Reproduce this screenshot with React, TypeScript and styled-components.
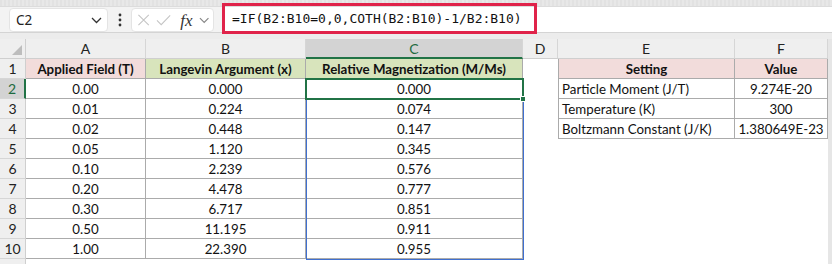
import styled, { createGlobalStyle } from 'styled-components'

const GlobalStyle = createGlobalStyle`
  html, body { margin: 0; padding: 0; background: #f3f3f3; }
  * { box-sizing: border-box; }
`

const COLS = [26, 120, 160, 217, 35, 177, 93]

const Window = styled.div`
  width: 832px;
  height: 264px;
  overflow: hidden;
  background: #f3f3f3;
  font-family: 'Lato', 'Liberation Sans', sans-serif;
`

const TopStrip = styled.div`
  height: 7px;
  background: repeating-linear-gradient(90deg, #e2e2e2 0 2px, #e8e8e8 2px 4px);
  border-bottom: 1px solid #dcdcdc;
`

const FormulaBar = styled.div`
  height: 26px;
  display: flex;
  align-items: stretch;
  background: #f3f3f3;
  border-bottom: 1px solid #d4d4d4;
`

const NameBox = styled.div`
  width: 99px;
  height: 24px;
  margin: 1px 0 0 9px;
  background: #fff;
  border: 1px solid #e4e4e4;
  border-radius: 4px;
  display: flex;
  align-items: center;
  justify-content: space-between;
  padding: 0 5px 0 6px;
  font-family: 'Noto Sans', sans-serif;
  font-size: 13.5px;
  color: #222;
`

const Dots = styled.div`
  width: 23px;
  display: flex;
  align-items: center;
  justify-content: center;
`

const FxBox = styled.div`
  width: 83px;
  height: 24px;
  margin-top: 1px;
  background: #fff;
  border: 1px solid #e4e4e4;
  border-radius: 4px;
  display: flex;
  align-items: center;
  padding: 0 4px 0 5px;
  gap: 6px;
`

const FxText = styled.span`
  font-family: 'Liberation Serif', serif;
  font-style: italic;
  font-size: 17px;
  color: #333;
  margin-left: 3px;
  line-height: 1;
`

const FormulaInput = styled.div`
  flex: 1;
  margin-left: 8px;
  background: #fff;
  position: relative;
`

const Highlight = styled.div`
  position: absolute;
  left: 0;
  top: -4px;
  width: 315px;
  height: 31px;
  border: 3px solid #e0234a;
  display: flex;
  align-items: center;
  padding-left: 7px;
  font-family: 'DejaVu Sans Mono', monospace;
  font-size: 13px;
  color: #111;
  white-space: nowrap;
`

const Band = styled.div`
  height: 6px;
  background: #ececec;
`

const Sheet = styled.div`
  position: relative;
  display: grid;
  grid-template-columns: ${COLS.map((c) => c + 'px').join(' ')} 1fr;
  grid-auto-rows: 20px;
  background: #fff;
`

const ColHead = styled.div<{ $active?: boolean }>`
  background: ${({ $active }) => ($active ? '#d3d3d3' : '#efefef')};
  border-right: 1px solid #d6d6d6;
  border-bottom: ${({ $active }) => ($active ? '2px solid #217346' : '1px solid #cfcfcf')};
  display: flex;
  align-items: center;
  justify-content: center;
  font-size: 14px;
  color: ${({ $active }) => ($active ? '#1e6b3f' : '#222')};
`

const Corner = styled.div`
  background: #efefef;
  border-right: 1px solid #cfcfcf;
  border-bottom: 1px solid #cfcfcf;
  display: flex;
  align-items: flex-end;
  justify-content: flex-end;
  padding: 0 3px 3px 0;
`

const RowHead = styled.div<{ $active?: boolean }>`
  background: ${({ $active }) => ($active ? '#d3d3d3' : '#efefef')};
  border-right: ${({ $active }) => ($active ? '2px solid #217346' : '1px solid #cfcfcf')};
  border-bottom: 1px solid #d6d6d6;
  display: flex;
  align-items: center;
  justify-content: center;
  font-size: 14px;
  color: ${({ $active }) => ($active ? '#1e6b3f' : '#222')};
`

const Gutter = styled.div`
  background: #e6e6e6;
`

const Cell = styled.div<{ $fill?: string; $bold?: boolean; $left?: boolean; $border?: boolean; $borderLeft?: boolean }>`
  background: ${({ $fill }) => $fill ?? '#fff'};
  font-weight: ${({ $bold }) => ($bold ? 700 : 400)};
  font-size: 13.3px;
  color: #111;
  display: flex;
  align-items: center;
  justify-content: ${({ $left }) => ($left ? 'flex-start' : 'center')};
  padding: 0 3px;
  white-space: nowrap;
  overflow: hidden;
  border-right: ${({ $border }) => ($border ? '1px solid #ababab' : 'none')};
  border-bottom: ${({ $border }) => ($border ? '1px solid #ababab' : 'none')};
  border-left: ${({ $borderLeft }) => ($borderLeft ? '1px solid #ababab' : 'none')};
`

const SpillOutline = styled.div`
  position: absolute;
  left: 306px;
  top: 40px;
  width: 218px;
  height: 181px;
  border: 1px solid #3f6fd0;
  pointer-events: none;
`

const ActiveCell = styled.div`
  position: absolute;
  left: 305px;
  top: 39px;
  width: 219px;
  height: 22px;
  border: 2px solid #217346;
  pointer-events: none;
`

const FillHandle = styled.div`
  position: absolute;
  right: -4px;
  bottom: -4px;
  width: 6px;
  height: 6px;
  background: #217346;
  border: 1px solid #fff;
`

const PINK = '#f2dcdb'
const GREEN = '#d8e4bc'

const fieldA = ['0.00', '0.01', '0.02', '0.05', '0.10', '0.20', '0.30', '0.50', '1.00']
const argB = ['0.000', '0.224', '0.448', '1.120', '2.239', '4.478', '6.717', '11.195', '22.390']
const magC = ['0.000', '0.074', '0.147', '0.345', '0.576', '0.777', '0.851', '0.911', '0.955']
const settings: [string, string][] = [
  ['Particle Moment (J/T)', '9.274E-20'],
  ['Temperature (K)', '300'],
  ['Boltzmann Constant (J/K)', '1.380649E-23'],
]

function Chevron({ color = '#444' }: { color?: string }) {
  return (
    <svg width="11" height="7" viewBox="0 0 11 7">
      <path d="M1 1l4.5 4.5L10 1" fill="none" stroke={color} strokeWidth="1.3" />
    </svg>
  )
}

export default function App() {
  return (
    <Window>
      <GlobalStyle />
      <TopStrip />
      <FormulaBar>
        <NameBox>
          <span>C2</span>
          <Chevron color="#333" />
        </NameBox>
        <Dots>
          <svg width="4" height="14" viewBox="0 0 4 14">
            <circle cx="2" cy="2" r="1.4" fill="#333" />
            <circle cx="2" cy="7" r="1.4" fill="#333" />
            <circle cx="2" cy="12" r="1.4" fill="#333" />
          </svg>
        </Dots>
        <FxBox>
          <svg width="14" height="14" viewBox="0 0 14 14">
            <path d="M1.5 1.5l11 11M12.5 1.5l-11 11" stroke="#c4c4c4" strokeWidth="1.1" />
          </svg>
          <svg width="16" height="14" viewBox="0 0 16 14">
            <path d="M1 7.5l4.5 4.5L15 2" fill="none" stroke="#c4c4c4" strokeWidth="1.1" />
          </svg>
          <FxText>fx</FxText>
          <Chevron color="#888" />
        </FxBox>
        <FormulaInput>
          <Highlight>=IF(B2:B10=0,0,COTH(B2:B10)-1/B2:B10)</Highlight>
        </FormulaInput>
      </FormulaBar>
      <Band />
      <Sheet>
        <Corner>
          <svg width="10" height="10" viewBox="0 0 10 10">
            <path d="M10 0V10H0Z" fill="#bdbdbd" />
          </svg>
        </Corner>
        {['A', 'B', 'C', 'D', 'E', 'F'].map((l) => (
          <ColHead key={l} $active={l === 'C'}>{l}</ColHead>
        ))}
        <Gutter />

        <RowHead>1</RowHead>
        <Cell $fill={PINK} $bold $border>Applied Field (T)</Cell>
        <Cell $fill={GREEN} $bold $border>Langevin Argument (x)</Cell>
        <Cell $fill={GREEN} $bold $border>Relative Magnetization (M/Ms)</Cell>
        <Cell />
        <Cell $fill={PINK} $bold $border $borderLeft>Setting</Cell>
        <Cell $fill={PINK} $bold $border>Value</Cell>
        <Gutter />

        {fieldA.map((a, i) => {
          const s = settings[i]
          return [
            <RowHead key={`h${i}`} $active={i === 0}>{i + 2}</RowHead>,
            <Cell key={`a${i}`} $border>{a}</Cell>,
            <Cell key={`b${i}`} $border>{argB[i]}</Cell>,
            <Cell key={`c${i}`} $border>{magC[i]}</Cell>,
            <Cell key={`d${i}`} />,
            s ? (
              <Cell key={`e${i}`} $left $border $borderLeft>{s[0]}</Cell>
            ) : (
              <Cell key={`e${i}`} />
            ),
            s ? <Cell key={`f${i}`} $border>{s[1]}</Cell> : <Cell key={`f${i}`} />,
            <Gutter key={`g${i}`} />,
          ]
        })}

        <RowHead />
        <Cell />
        <Cell />
        <Cell />
        <Cell />
        <Cell />
        <Cell />
        <Gutter />

        <SpillOutline />
        <ActiveCell>
          <FillHandle />
        </ActiveCell>
      </Sheet>
    </Window>
  )
}
